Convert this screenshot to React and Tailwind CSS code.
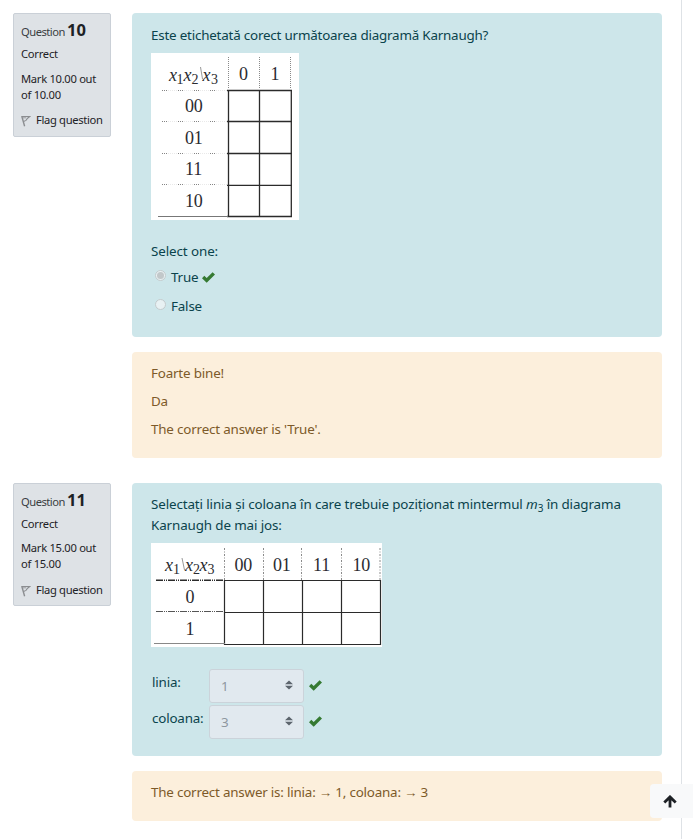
import React from "react";

const serif = "fill-[#2b2b30] font-['Liberation_Serif',serif]";

function Check({ className = "" }) {
  return (
    <svg viewBox="0 0 13 11" className={"w-[13px] h-[11px] shrink-0 " + className} fill="#357a32">
      <path d="M4.7 10.8 0 6.2 2.3 3.8 4.7 6.1 10.6 0.2 13 2.6Z" />
    </svg>
  );
}

function Flag() {
  return (
    <svg viewBox="0 0 10 12" className="w-[10px] h-[12px] shrink-0" fill="none" stroke="#8b8d90">
      <path d="M0.8 1.2 3.6 11.3" strokeWidth="1.4" />
      <path d="M0.5 1.5H8.8L6.6 3.2 5 5.4 2.6 6.4" strokeWidth="1.1" />
      <path d="M2 2.8H5.2" strokeWidth="0.8" />
    </svg>
  );
}

function Info({ number, mark, height, markTop, flagTop }) {
  return (
    <div className={"w-[98px] shrink-0 border border-[#cad0d7] bg-[#dee2e6] rounded-[2px] pl-[7px] text-[#1d2125] text-[11.2px] " + height}>
      <div className="flex items-baseline h-[25px] pt-[3px] leading-[25px] whitespace-nowrap">
        <span className="w-[46px] tracking-[-0.5px] text-[#3a3e42]">Question</span>
        <b className="text-[16.5px] tracking-[0.1px]">{number}</b>
      </div>
      <div className="mt-[6px] h-[17px] leading-[17px] tracking-[-0.25px]">Correct</div>
      <div className={"h-[33px] leading-[16px] whitespace-nowrap tracking-[-0.3px] " + markTop}>
        Mark {mark} out
        <br />
        of {mark}
      </div>
      <div className={"flex items-center h-[17px] whitespace-nowrap " + flagTop}>
        <Flag />
        <span className="ml-[5px] tracking-[-0.33px]">Flag question</span>
      </div>
    </div>
  );
}

function MapThreeRows() {
  const rows = ["00", "01", "11", "10"];
  return (
    <svg className="block w-[148px] h-[167px] bg-white" viewBox="0 0 148 167">
      <g className={serif}>
        <g fontStyle="italic" fontSize="18">
          <text x="18" y="28">x</text>
          <text x="32.5" y="28">x</text>
          <text x="51.5" y="28">x</text>
        </g>
        <g fontSize="14">
          <text x="25.5" y="31">1</text>
          <text x="40.5" y="31">2</text>
          <text x="60" y="31">3</text>
        </g>
        <g fontSize="18">
          <text x="88" y="27">0</text>
          <text x="119.5" y="27">1</text>
          {rows.map((r, i) => (
            <text key={r} x="34" y={58.8 + i * 31.8}>{r}</text>
          ))}
        </g>
      </g>
      <path d="M49.5 14 51.5 26" stroke="#999" strokeWidth="1" />
      <g stroke="#8a8a8a" strokeDasharray="1 1">
        <path d="M77.5 4V36M108.5 4V36M139.5 4V36" />
      </g>
      <g stroke="#333" strokeDasharray="1 1 1 1 1 11">
        <path d="M11 37.5H74M11 68.5H74M11 100.5H74M11 131.5H74" />
      </g>
      <g stroke="#d5d5d5" strokeDasharray="1 1">
        <path d="M11 37.5H76M11 68.5H76M11 100.5H76M11 131.5H76" opacity=".5" />
      </g>
      <g stroke="#2b2b2b" strokeWidth="1.3">
        <path d="M77.5 37V164M108.5 37V164M140.3 37V164M76 37.5H141M76 68.5H141M76 100.5H141M76 132.3H141M76 163.5H141" />
        <path d="M7 163.5H77" stroke="#777" strokeWidth="1" />
      </g>
    </svg>
  );
}

function MapTwoRows() {
  return (
    <svg className="block w-[231px] h-[104px] bg-white" viewBox="0 0 231 104">
      <g className={serif}>
        <g fontStyle="italic" fontSize="18">
          <text x="14" y="28">x</text>
          <text x="34" y="28">x</text>
          <text x="48.5" y="28">x</text>
        </g>
        <g fontSize="14">
          <text x="22" y="31">1</text>
          <text x="42" y="31">2</text>
          <text x="56.5" y="31">3</text>
        </g>
        <g fontSize="18">
          <text x="83.5" y="28">00</text>
          <text x="122" y="28">01</text>
          <text x="162" y="28">11</text>
          <text x="201.5" y="28">10</text>
          <text x="34.5" y="60">0</text>
          <text x="34.5" y="92">1</text>
        </g>
      </g>
      <path d="M31 15 33.5 27" stroke="#999" strokeWidth="1" />
      <g stroke="#8a8a8a" strokeDasharray="2 1.5 1 1.5">
        <path d="M73.5 5V37M112.5 5V37M150.5 5V37M190.5 5V37M229 5V37" />
      </g>
      <g stroke="#2b2b2b">
        <path d="M5 37.3H73" strokeDasharray="7 1 1 1 1 1" strokeWidth="1.6" />
        <path d="M5 68.5H73" stroke="#555" strokeDasharray="7 1 1 1 1 1" />
        <path d="M73.5 37V102M112.5 37V102M151.5 37V102M190.5 37V102M229.5 37V102" strokeWidth="1.2" />
        <path d="M73 37.5H230M73 69.5H230M73 101.5H230" strokeWidth="1.2" />
        <path d="M3 100.5H74" stroke="#888" strokeWidth="1" />
      </g>
    </svg>
  );
}

function Radio({ label, on }) {
  return (
    <div className="flex items-center h-[21px] pl-1">
      <span className="w-[11px] h-[11px] -mt-[4px] rounded-full border border-[#c4cbcd] bg-[#e8f1f3] flex items-center justify-center">
        {on && <span className="w-[7px] h-[7px] rounded-full bg-[#c2c8ca]" />}
      </span>
      <span className="ml-[5px]">{label}</span>
      {on && <Check className="ml-[4px] -mt-px" />}
    </div>
  );
}

function SelectRow({ label, value }) {
  return (
    <div className="flex h-[36px]">
      <span className="w-[57px] pl-px pt-[3px] leading-[21px] whitespace-nowrap">{label}</span>
      <div className="ml-px w-[95px] h-[34px] flex items-center justify-between rounded-[3px] border border-[#cbd3da] bg-[#e1e9ef] pl-[11px] pr-[10px] text-[#8e979f]">
        <span>{value}</span>
        <svg viewBox="0 0 8 10" className="w-[8px] h-[10px] -mt-[2px]" fill="#5c656d">
          <path d="M4 0.5 8 4.2H0ZM4 9.5 0 5.8H8Z" />
        </svg>
      </div>
      <Check className="ml-[5px] mt-[11px]" />
    </div>
  );
}

export default function App() {
  return (
    <div className="relative w-[693px] h-[839px] overflow-hidden bg-white font-['Noto_Sans','Open_Sans',sans-serif] text-[13.4px] tracking-[-0.18px]">
      <div className="w-[682px] h-full border-r border-[#dee2e6] pt-[13px] pl-[13px] flex flex-col gap-[25px]">
        <section className="flex gap-[21px]">
          <Info number="10" mark="10.00" height="h-[124px]" markTop="mt-[9px]" flagTop="mt-[8px]" />
          <div className="w-[530px] flex flex-col gap-[15px]">
            <div className="h-[324px] rounded-[4px] bg-[#cde6ea] text-[#0a434c] px-[19px] pt-[12px]">
              <p className="leading-[21px] whitespace-nowrap tracking-[-0.2px]">Este etichetată corect următoarea diagramă Karnaugh?</p>
              <div className="mt-[7px]"><MapThreeRows /></div>
              <p className="mt-[21px] leading-[21px] tracking-[-0.1px]">Select one:</p>
              <div className="mt-[5px] flex flex-col gap-[8px]">
                <Radio label="True" on />
                <Radio label="False" />
              </div>
            </div>
            <div className="h-[106px] rounded-[4px] bg-[#fcefdc] text-[#7d5a29] px-[19px] pt-[11px] flex flex-col gap-[7px] leading-[21px]">
              <p>Foarte bine!</p>
              <p>Da</p>
              <p>The correct answer is 'True'.</p>
            </div>
          </div>
        </section>
        <section className="flex gap-[21px]">
          <Info number="11" mark="15.00" height="h-[123px]" markTop="mt-[8px]" flagTop="mt-[9px]" />
          <div className="w-[530px] flex flex-col gap-[15px]">
            <div className="h-[273px] rounded-[4px] bg-[#cde6ea] text-[#0a434c] px-[19px] pt-[11px]">
              <p className="leading-[21px] whitespace-nowrap tracking-[-0.12px]">
                Selectați linia și coloana în care trebuie poziționat mintermul <i>m</i>
                <sub className="text-[10px] leading-none">3</sub> în diagrama
                <br />
                Karnaugh de mai jos:
              </p>
              <div className="mt-[7px]"><MapTwoRows /></div>
              <div className="mt-[22px]">
                <SelectRow label="linia:" value="1" />
                <SelectRow label="coloana:" value="3" />
              </div>
            </div>
            <div className="h-[50px] rounded-[4px] bg-[#fcefdc] text-[#7d5a29] px-[19px] pt-[11px] leading-[21px]">
              <p className="whitespace-nowrap tracking-[-0.2px]">The correct answer is: linia: → 1, coloana: → 3</p>
            </div>
          </div>
        </section>
      </div>
      <div className="absolute left-[650px] top-[784px] w-[43px] h-[34px] rounded-l-[4px] bg-[#f8f9fa] flex items-center pl-[13px]">
        <svg viewBox="0 0 14 13" className="w-[14px] h-[13px]" fill="none" stroke="#1d2125" strokeWidth="2.8">
          <path d="M7 12.6V2M1.3 7.5 7 1.9 12.7 7.5" />
        </svg>
      </div>
    </div>
  );
}
